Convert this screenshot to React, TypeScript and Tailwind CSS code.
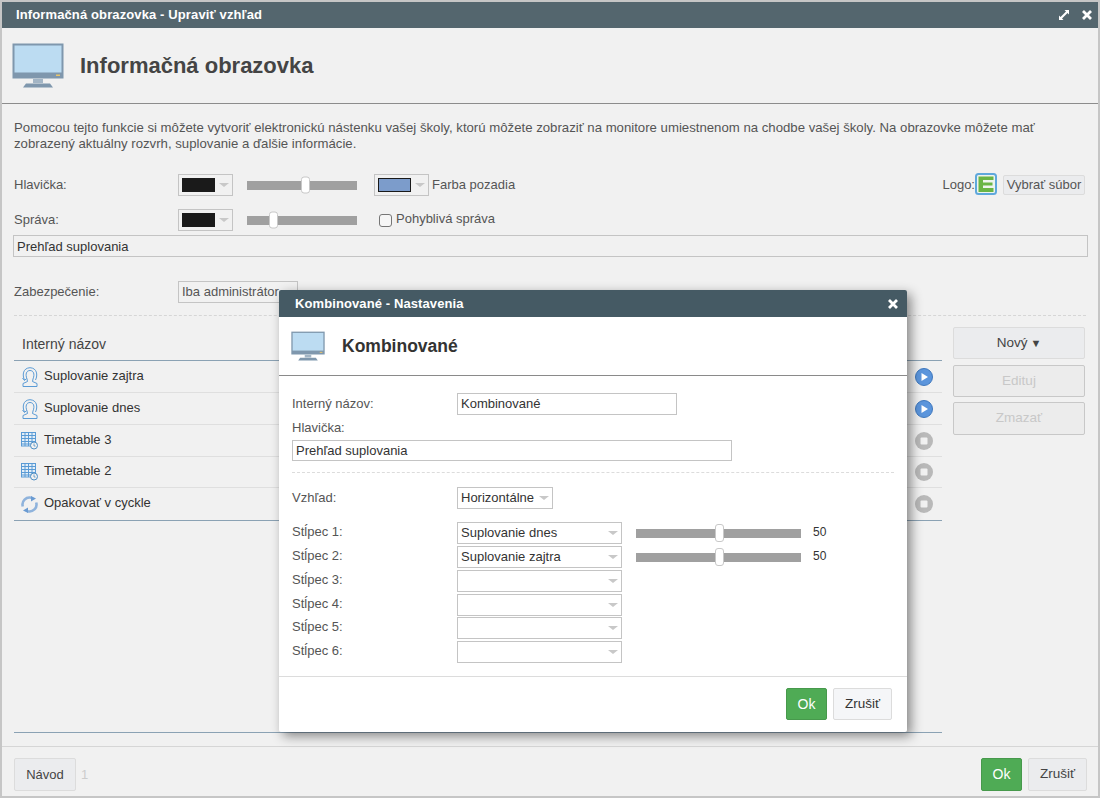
import React from "react";

const font = { fontFamily: '"Liberation Sans", Arial, sans-serif' };

function Monitor({ w, h }: { w: number; h: number }) {
  return (
    <svg width={w} height={h} viewBox="0 0 52 45" className="shrink-0">
      <rect x="0.5" y="0.5" width="51" height="35" fill="#7f97ad" />
      <rect x="2.5" y="2.5" width="47" height="27" fill="#bcdcf2" />
      <rect x="44" y="31.5" width="4" height="1.5" fill="#e8c56c" />
      <rect x="21" y="36" width="10" height="4" fill="#a3b5c5" />
      <path d="M11 44.5 L14 40.5 H38 L41 44.5 Z" fill="#7f97ad" />
    </svg>
  );
}

function PersonIcon() {
  return (
    <svg width="16" height="20" viewBox="0 0 16 20" fill="none" stroke="#5b9bd5" strokeWidth="1" className="shrink-0 ml-[1px]">
      <path d="M2.5 13 C0 8 1 1 8 0.7 C15 1 16 8 13.5 13" />
      <path d="M5 12 C3 7 4.5 3.5 8 3.5 C11.5 3.5 13 7 11 12 L10.5 14.5 L15 16.5 V19.5 H1 V16.5 L5.5 14.5 Z" />
      <path d="M0.5 11 L2.5 13.5 L4.5 11.5" />
    </svg>
  );
}

function GridIcon() {
  return (
    <svg width="17" height="18" viewBox="0 0 17 18" fill="none" className="shrink-0">
      <rect x="0.5" y="0.5" width="14" height="13.5" fill="#e4eff8" stroke="#5b9bd5" />
      <path d="M0.5 3.5H14.5M0.5 6.5H14.5M0.5 9.5H14.5M0.5 12H14.5M4 0.5V14M7.5 0.5V14M11 0.5V14" stroke="#5b9bd5" />
      <circle cx="13" cy="13.5" r="3.5" fill="#f1f1f1" stroke="#4f8fc4" />
      <path d="M13 11.5V14H14.5" stroke="#4f8fc4" strokeWidth="0.8" />
    </svg>
  );
}

function CycleIcon() {
  return (
    <svg width="17" height="17" viewBox="0 0 17 17" fill="none" className="shrink-0">
      <path d="M1.8 10.5 A7 7 0 0 1 10.5 1.8" stroke="#8fb3dc" strokeWidth="2.6" />
      <path d="M15.2 6.5 A7 7 0 0 1 6.5 15.2" stroke="#8fb3dc" strokeWidth="2.6" />
      <path d="M10 0 L15 2.5 L10 5.5 Z" fill="#6a9bd2" />
      <path d="M7 11.5 L2 14.5 L7 17 Z" fill="#6a9bd2" />
    </svg>
  );
}

function ELogo() {
  return (
    <svg width="22" height="22" viewBox="0 0 22 22" className="shrink-0 mb-[2px]">
      <rect x="1" y="1" width="20" height="20" rx="2.5" fill="#eef4ee" stroke="#5fa8dc" strokeWidth="2" />
      <path d="M3.5 3.5 H18.5 V7 H8 V9.5 H17.5 V12.5 H8 V15 H18.5 V19 H3.5 Z" fill="#6ab545" />
    </svg>
  );
}

function PlayIcon() {
  return (
    <svg width="18" height="18" viewBox="0 0 18 18" className="shrink-0">
      <circle cx="9" cy="9" r="8.5" fill="#5b95dc" stroke="#3f78bd" />
      <path d="M6.5 5 L13 9 L6.5 13 Z" fill="#fff" />
    </svg>
  );
}

function StopIcon() {
  return (
    <svg width="18" height="18" viewBox="0 0 18 18" className="shrink-0">
      <circle cx="9" cy="9" r="9" fill="#b9b9b9" />
      <rect x="5.5" y="5.5" width="7" height="7" rx="1" fill="#f1f1f1" />
    </svg>
  );
}

function Caret({ className = "" }: { className?: string }) {
  return <span className={`block w-0 h-0 border-l-[5px] border-r-[5px] border-t-[4px] border-l-transparent border-r-transparent border-t-[#c8c8c8] ${className}`} />;
}

function Slider({ width, thumb, thumbH = 17 }: { width: string; thumb: number; thumbH?: number }) {
  return (
    <div className={`relative ${width} h-[9px] bg-[#a0a0a0] shrink-0`}>
      <span
        className="absolute top-1/2 -translate-y-1/2 w-[9px] bg-white border border-[#c8c8c8] rounded-[3px]"
        style={{ left: thumb, height: thumbH }}
      />
    </div>
  );
}

function ColorSelect({ color, outlined }: { color: string; outlined?: boolean }) {
  return (
    <div className="w-[55px] h-[22px] border border-[#c4c4c4] flex items-center pl-[3px] shrink-0">
      <span className={`block w-[33px] h-[14px] ${outlined ? "border border-[#1a1a1a]" : ""}`} style={{ backgroundColor: color }} />
      <Caret className="ml-[4px]" />
    </div>
  );
}

function Btn({ children, className = "" }: { children: React.ReactNode; className?: string }) {
  return (
    <div className={`flex items-center justify-center border border-[#dcdcdc] rounded-[2px] bg-[#ebecee] text-[13.5px] text-[#444] ${className}`}>
      {children}
    </div>
  );
}

function GreenBtn({ className = "" }: { className?: string }) {
  return (
    <div className={`flex items-center justify-center rounded-[2px] bg-[#4fab55] border border-[#47994c] text-white text-[14px] ${className}`}>
      Ok
    </div>
  );
}

const rows = [
  { name: "Suplovanie zajtra", icon: <PersonIcon />, on: true, h: "h-[32px]" },
  { name: "Suplovanie dnes", icon: <PersonIcon />, on: true, h: "h-[32px]" },
  { name: "Timetable 3", icon: <GridIcon />, on: false, h: "h-[32px]" },
  { name: "Timetable 2", icon: <GridIcon />, on: false, h: "h-[31px]" },
  { name: "Opakovať v cyckle", icon: <CycleIcon />, on: false, h: "h-[32px]" },
];

const columns = [
  { label: "Stĺpec 1:", value: "Suplovanie dnes", slider: true, mt: "mt-[13px]" },
  { label: "Stĺpec 2:", value: "Suplovanie zajtra", slider: true, mt: "mt-[2px]" },
  { label: "Stĺpec 3:", value: "", slider: false, mt: "mt-[2px]" },
  { label: "Stĺpec 4:", value: "", slider: false, mt: "mt-[2px]" },
  { label: "Stĺpec 5:", value: "", slider: false, mt: "mt-[1px]" },
  { label: "Stĺpec 6:", value: "", slider: false, mt: "mt-[2px]" },
];

function Modal() {
  return (
    <div className="absolute left-[277px] top-[288px] w-[628px] h-[442px] bg-white rounded-[2px] shadow-[4px_4px_12px_rgba(0,0,0,0.45)] flex flex-col text-[13px] text-[#333]">
      <div className="h-[27px] bg-[#455a64] flex items-center justify-between pl-[16px] pr-[8px] text-white font-bold text-[13px] tracking-[0.1px] rounded-t-[2px] shrink-0">
        <span>Kombinované - Nastavenia</span>
        <svg width="12" height="12" viewBox="0 0 12 12"><path d="M2 2L10 10M10 2L2 10" stroke="#fff" strokeWidth="2.8" /></svg>
      </div>
      <div className="h-[59px] border-b border-[#8a8a8a] flex items-center pl-[12px] shrink-0">
        <Monitor w={34} h={30} />
        <span className="ml-[17px] text-[17.5px] font-bold text-[#333]">Kombinované</span>
      </div>
      <div className="flex-1 px-[13px] flex flex-col">
        <div className="flex items-center mt-[17px] h-[22px]">
          <span className="w-[165px] text-[#555]">Interný názov:</span>
          <div className="w-[220px] h-[22px] border border-[#c4c4c4] flex items-center px-[3px]">Kombinované</div>
        </div>
        <div className="mt-[5px] h-[16px] leading-[16px] text-[#555]">Hlavička:</div>
        <div className="mt-[4px] w-[440px] h-[21px] border border-[#c4c4c4] flex items-center px-[3px]">Prehľad suplovania</div>
        <div className="mt-[11px] border-t border-dashed border-[#dcdcdc]" />
        <div className="flex items-center mt-[14px] h-[22px]">
          <span className="w-[165px] text-[#555]">Vzhľad:</span>
          <div className="w-[96px] h-[22px] border border-[#c4c4c4] flex items-center pl-[3px] gap-[5px]">
            <span>Horizontálne</span>
            <Caret />
          </div>
        </div>
        {columns.map((c) => (
          <div key={c.label} className={`flex items-center h-[22px] ${c.mt}`}>
            <span className="w-[165px] text-[#555] pb-[2px]">{c.label}</span>
            <div className="w-[165px] h-[22px] border border-[#c4c4c4] flex items-center justify-between pl-[3px] pr-[3px]">
              <span>{c.value}</span>
              <Caret />
            </div>
            {c.slider && (
              <>
                <div className="ml-[14px]"><Slider width="w-[165px]" thumb={79} thumbH={18} /></div>
                <span className="ml-[12px] text-[12px] pb-[2px]">50</span>
              </>
            )}
          </div>
        ))}
      </div>
      <div className="h-[56px] border-t border-[#dcdcdc] flex items-start justify-end gap-[6px] pr-[15px] pt-[11px] shrink-0">
        <GreenBtn className="w-[41px] h-[32px]" />
        <Btn className="w-[59px] h-[32px] !bg-[#f5f6f8] !text-[#333]">Zrušiť</Btn>
      </div>
    </div>
  );
}

export default function App() {
  return (
    <div style={font} className="relative w-[1100px] h-[798px] box-border border-2 border-[#c6c6c6] bg-[#f1f1f1] flex flex-col text-[13px] text-[#555] overflow-hidden">
      <div className="h-[26px] bg-[#54666e] flex items-center justify-between pl-[14px] pr-[5px] text-white font-bold text-[13px] tracking-[0.12px] shrink-0">
        <span className="pb-[1px]">Informačná obrazovka - Upraviť vzhľad</span>
        <div className="flex items-center gap-[12px]">
          <svg width="10" height="10" viewBox="0 0 10 10" fill="#fff"><path d="M5.5 0H10V4.5L8.5 3 3 8.5 4.5 10H0V5.5L1.5 7 7 1.5Z" /></svg>
          <svg width="12" height="12" viewBox="0 0 12 12"><path d="M2 2L10 10M10 2L2 10" stroke="#fff" strokeWidth="2.8" /></svg>
        </div>
      </div>
      <div className="h-[76px] border-b border-[#8c8c8c] flex items-center pl-[10px] shrink-0">
        <Monitor w={52} h={45} />
        <span className="ml-[16px] text-[22px] font-bold text-[#444]">Informačná obrazovka</span>
      </div>

      <div className="px-[12px] pt-[16px] leading-[16px] text-[13.2px]">
        Pomocou tejto funkcie si môžete vytvoriť elektronickú nástenku vašej školy, ktorú môžete zobraziť na monitore umiestnenom na chodbe vašej školy. Na obrazovke môžete mať zobrazený aktuálny rozvrh, suplovanie a ďalšie informácie.
      </div>

      <div className="flex items-center h-[22px] mt-[22px] ml-[12px] mr-[13px]">
        <span className="w-[164px]">Hlavička:</span>
        <ColorSelect color="#1a1a1a" />
        <div className="ml-[14px]"><Slider width="w-[110px]" thumb={54} /></div>
        <div className="ml-[17px]"><ColorSelect color="#7c9ccb" outlined /></div>
        <span className="ml-[3px]">Farba pozadia</span>
        <span className="ml-auto">Logo:</span>
        <ELogo />
        <Btn className="ml-[6px] w-[82px] h-[20px] !text-[13px] !text-[#555]">Vybrať súbor</Btn>
      </div>

      <div className="flex items-center h-[22px] mt-[13px] ml-[12px]">
        <span className="w-[164px]">Správa:</span>
        <ColorSelect color="#1a1a1a" />
        <div className="ml-[14px]"><Slider width="w-[110px]" thumb={22} /></div>
        <span className="ml-[22px] w-[13px] h-[13px] border border-[#767676] rounded-[3px] bg-white/40 shrink-0" />
        <span className="ml-[4px] pb-[2px]">Pohyblivá správa</span>
      </div>

      <div className="mt-[4px] ml-[11px] mr-[10px] h-[22px] border border-[#c4c4c4] flex items-center pl-[3px] pt-[1px] text-[#333] shrink-0">Prehľad suplovania</div>

      <div className="flex items-center h-[22px] mt-[24px] ml-[12px]">
        <span className="w-[164px]">Zabezpečenie:</span>
        <div className="w-[120px] h-[22px] border border-[#c4c4c4] flex items-center pl-[3px] whitespace-nowrap overflow-hidden">Iba administrátor</div>
      </div>

      <div className="mt-[12px] mx-[12px] border-t border-dashed border-[#d6d6d6]" />

      <div className="flex-1 flex ml-[12px] mt-[11px] min-h-0">
        <div className="w-[928px] flex flex-col">
          <div className="h-[34px] border-b border-[#8ba2b4] flex items-center pl-[8px] pt-[1px] text-[14px] text-[#444] shrink-0">Interný názov</div>
          <div className="flex flex-col border-b border-[#8ba2b4]">
            {rows.map((r, i) => (
              <div key={r.name} className={`${r.h} flex items-center pl-[6px] pr-[9px] text-[#333] ${i < rows.length - 1 ? "border-b border-[#dfdfdf]" : ""}`}>
                <span className="w-[18px] flex justify-center">{r.icon}</span>
                <span className="ml-[6px] pb-[2px]">{r.name}</span>
                <span className="ml-auto">{r.on ? <PlayIcon /> : <StopIcon />}</span>
              </div>
            ))}
          </div>
          <div className="flex-1 border-b border-[#8ba2b4] mb-[13px]" />
        </div>
        <div className="ml-[11px] w-[132px] flex flex-col">
          <Btn className="h-[32px] gap-[3px]">Nový <span className="text-[11px]">▼</span></Btn>
          <Btn className="h-[32px] mt-[6px] !border-[#c8c8c8] !text-[#c8c8c8] !bg-[#ececec]">Edituj</Btn>
          <Btn className="h-[33px] mt-[5px] !border-[#c8c8c8] !text-[#c8c8c8] !bg-[#ececec]">Zmazať</Btn>
        </div>
      </div>

      <div className="h-[50px] border-t border-[#d6d6d6] flex items-start pl-[12px] pr-[11px] pt-[11px] shrink-0">
        <Btn className="w-[62px] h-[33px] !text-[13px]">Návod</Btn>
        <span className="ml-[5px] mt-[7px] text-[#ccc]">1</span>
        <GreenBtn className="ml-auto w-[41px] h-[33px]" />
        <Btn className="ml-[6px] w-[59px] h-[33px]">Zrušiť</Btn>
      </div>

      <Modal />
    </div>
  );
}
